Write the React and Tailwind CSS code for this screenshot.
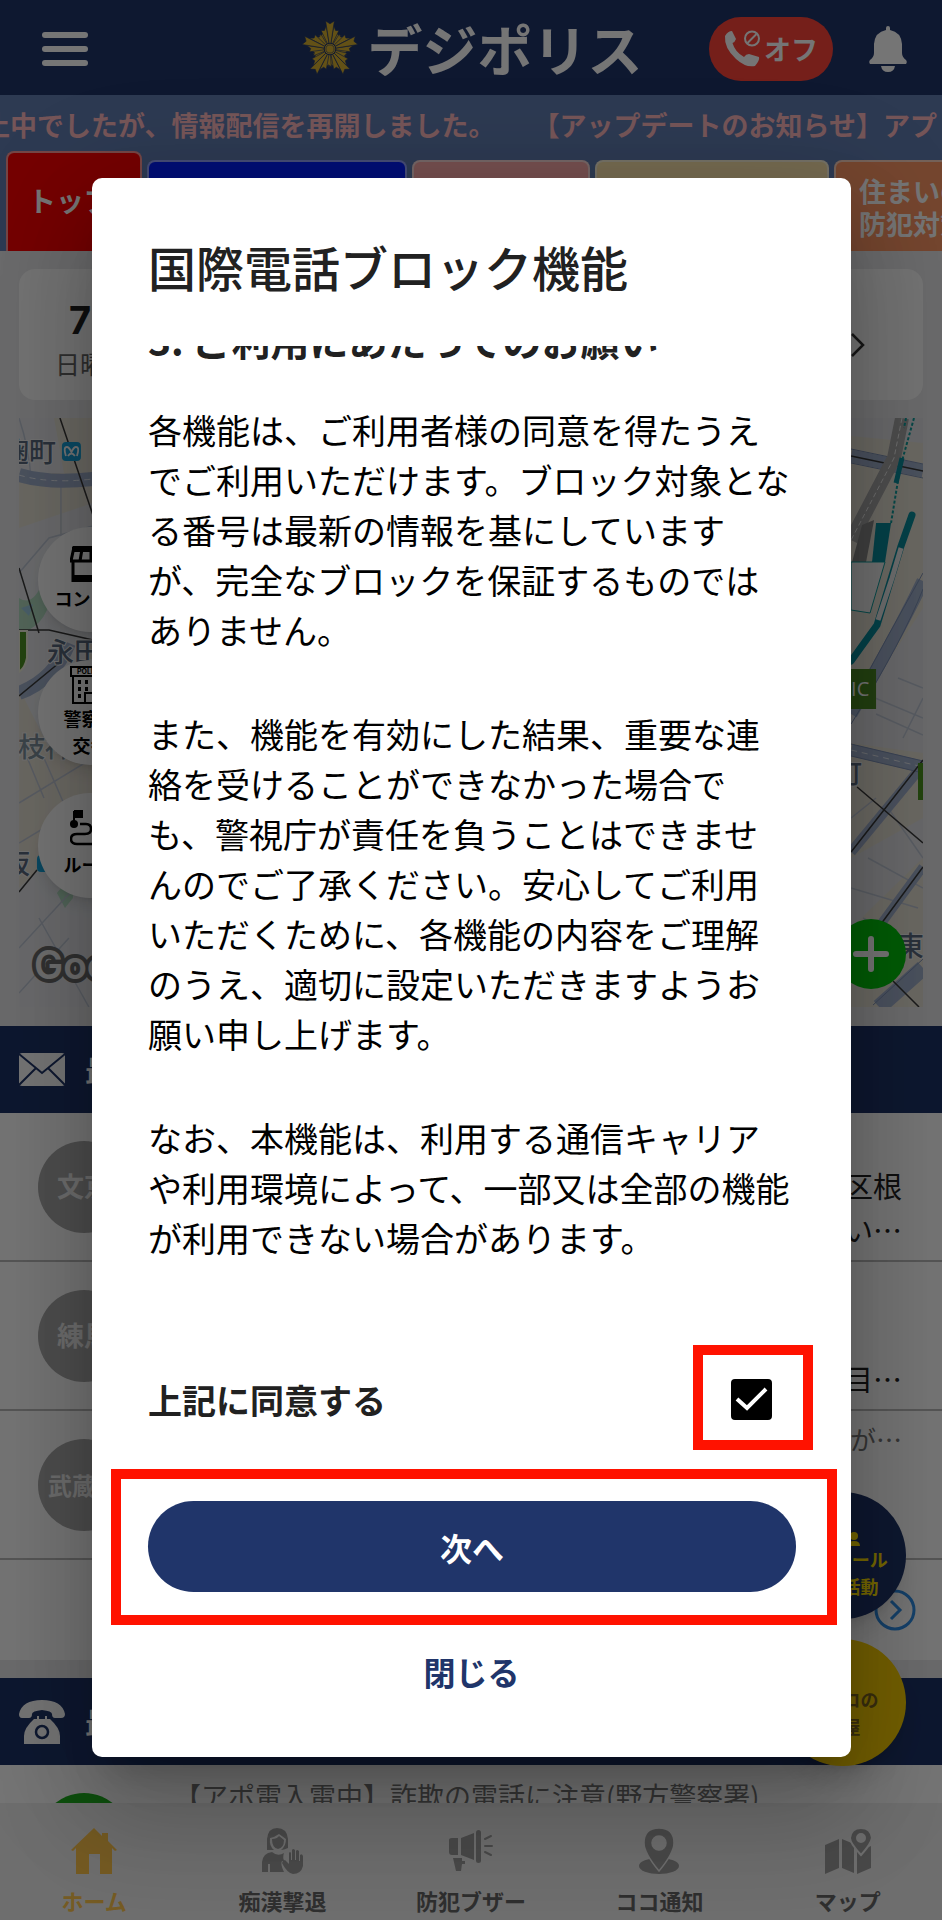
import React, { useState } from 'react';

const tabs = [
  { label: 'トップ', className: 'h-[100px] w-[136px] bg-[#ff0000] pr-2 pb-1 text-[28px]' },
  { label: '', className: 'h-[91px] w-[260px] bg-[#0020ff]' },
  { label: '', className: 'h-[91px] w-[178px] bg-[#ffacac]' },
  { label: '', className: 'h-[91px] w-[234px] bg-[#ffe8ae]' },
  { label: '住まいの\n防犯対策', className: 'h-[91px] w-[158px] bg-[#ff9866] text-[27px]' },
];

const mails = [
  { area: '文京', top: '', lines: ['区根', 'い…'] },
  { area: '練馬', top: '', lines: ['', '目…'] },
  { area: '武蔵野', top: 'が…', lines: ['', '…'] },
];

const paragraphs = [
  ['各機能は、ご利用者様の同意を得たうえ', 'でご利用いただけます。ブロック対象とな', 'る番号は最新の情報を基にしています', 'が、完全なブロックを保証するものでは', 'ありません。'],
  ['また、機能を有効にした結果、重要な連', '絡を受けることができなかった場合で', 'も、警視庁が責任を負うことはできませ', 'んのでご了承ください。安心してご利用', 'いただくために、各機能の内容をご理解', 'のうえ、適切に設定いただきますようお', '願い申し上げます。'],
  ['なお、本機能は、利用する通信キャリア', 'や利用環境によって、一部又は全部の機能', 'が利用できない場合があります。'],
];

const Emblem = () => (
  <svg viewBox="-30 -30 60 60" className="h-[58px] w-[58px]" fill="#d8b030">
    {[0, 72, 144, 216, 288].map((arm) => (
      <g key={arm} transform={`rotate(${arm})`} stroke="#20356a" strokeWidth="0.6">
        <path transform="rotate(-29)" d="M0 0 L-3.6 -18 L-0.6 -16.5 L2.6 -19 Z" />
        <path transform="rotate(29)" d="M0 0 L3.6 -18 L0.6 -16.5 L-2.6 -19 Z" />
        <path transform="rotate(-16)" d="M0 0 L-3.6 -21 L-0.3 -20 L2.8 -24 Z" />
        <path transform="rotate(16)" d="M0 0 L3.6 -21 L0.3 -20 L-2.8 -24 Z" />
        <path d="M0 0 L-4.5 -29 L0 -26 L4.5 -29 Z" />
      </g>
    ))}
    <circle r="6" stroke="#20356a" strokeWidth="1" />
    <circle r="4.2" fill="none" stroke="#20356a" strokeWidth="0.6" />
  </svg>
);

const PhoneOffIcon = () => (
  <svg viewBox="0 0 36 38" className="h-[38px] w-[36px]" fill="#fff">
    <path d="M1 6 Q4 1 8 1 L12 9 Q11 12 8.500 13 Q11 22 20 27 Q22 24 25 24 L35 27 Q36 30 31 36 Q22 38 12 29 Q0 18 1 6 Z" />
    <circle cx="28" cy="8.500" r="7" fill="none" stroke="#fff" strokeWidth="2" />
    <path d="M23.500 13 L32.500 4" stroke="#fff" strokeWidth="2" />
  </svg>
);

const BellIcon = () => (
  <svg viewBox="0 0 38 46" className="h-[46px] w-[38px]" fill="#fff">
    <path d="M17 4 V2 Q17 0 19 0 Q21 0 21 2 V4 Q32 6 33 18 V27 Q33 31 37 34 Q38.500 36 37 38 H1 Q-0.500 36 1 34 Q5 31 5 27 V18 Q6 6 17 4 Z" />
    <path d="M12 40 H26 Q25 46 19 46 Q13 46 12 40 Z" />
  </svg>
);

const MapDrawing = () => (
  <svg viewBox="0 0 905 589" preserveAspectRatio="none" className="block h-full w-full">
    <rect width="905" height="589" fill="#eae4d8" />
    {/* city blocks */}
    <path d="M0 0 H35 L45 55 H0 Z M0 110 L74 85 V220 L30 330 L0 270 Z M0 470 L74 400 V589 H0 Z" fill="#e6e8ec" />
    <path d="M833 0 H905 V25 L833 18 Z M833 300 L905 190 V335 L833 325 Z M833 440 L905 400 V440 L833 510 Z" fill="#e4e5e9" />
    <path d="M0 180 Q15 190 25 160 H32 V180 Q25 210 0 215 Z M38 475 L55 455 L54 480 L46 490 Z" fill="#b5dfc4" />
    <path d="M2 190 l12 -4 l-4 12 z" fill="#9fcfe4" />
    {/* minor streets */}
    <g stroke="#c3cad8" strokeWidth="1.500" fill="none">
      <path d="M0 155 L30 120 L74 108 M42 68 V118 M0 320 L25 380 M0 385 L74 340 M25 340 L60 420 M0 425 L50 395 M0 530 L74 450 M20 500 L70 589 M0 575 L50 520 M0 0 Q10 30 12 60" />
      <path d="M833 270 L905 300 M858 296 L905 317 M880 260 L905 270 M850 440 L905 470 M833 470 L900 490 M870 390 L905 440 M845 500 L880 520 M885 320 L905 280 M833 400 L858 380" />
    </g>
    {/* main roads */}
    <g stroke="#a3b3cf" fill="none">
      <path d="M0 57 Q30 66 74 61" strokeWidth="14" />
      <path d="M0 275 Q35 262 50 225" strokeWidth="14" />
      <path d="M833 38 L905 53" strokeWidth="13" />
      <path d="M905 163 Q880 215 833 296" strokeWidth="13" />
      <path d="M833 332 L905 349" strokeWidth="12" />
      <path d="M905 347 L833 434" strokeWidth="10" />
      <path d="M905 449 L860 510" strokeWidth="9" />
      <path d="M905 550 L861 589" strokeWidth="16" />
    </g>
    <g stroke="#7f93b8" strokeWidth="1" fill="none">
      <path d="M905 155 Q874 210 833 286 M905 171 Q886 220 833 306 M833 31 L905 46 M833 45 L905 60" />
      <path d="M833 326 L905 343 M833 338 L905 355 M905 541 L855 587" />
    </g>
    <g stroke="#e5e9f2" strokeDasharray="6 5" fill="none">
      <path d="M0 57 Q30 66 74 61 M833 332 L905 349" />
    </g>
    <g stroke="#3b3b3b" strokeWidth="1.500" fill="none">
      <path d="M41 0 L74 97 M0 278 L40 245 M0 150 L20 215 M0 212 H30 L74 222 M0 474 L18 452" />
      <path d="M839 369 L905 425 M905 342 L833 434 M905 449 L860 510 M875 563 L901 589 M833 38 L905 53" />
    </g>
    {/* rail yard */}
    <path d="M884 0 L876 40 L833 122" stroke="#aaa" strokeWidth="14" fill="none" />
    <path d="M884 0 L876 40 L833 122" stroke="#eee" strokeDasharray="5 3" fill="none" />
    <path d="M844 107 L856 102 L848 144 L834 144 Z" fill="#8c8c8c" />
    <path d="M833 144 H867 L852 195 L833 192 Z" fill="#f4f4f4" stroke="#11a0a0" strokeWidth="1" />
    <path d="M858 105 H873 L867 144 H854 Z" fill="#0b90a0" />
    <path d="M896 0 L882 50 L873 105 M888 0 L886 10" stroke="#11a0a0" strokeWidth="2" strokeDasharray="3 2" fill="none" />
    <path d="M884 40 L878 65" stroke="#0b90a0" strokeWidth="5" />
    <path d="M894 97 L883 128 L859 207 L833 243" stroke="#0b90a0" strokeWidth="7" strokeLinecap="round" fill="none" />
    <path d="M883 130 L874 160 L860 202" stroke="#f0f0f0" strokeWidth="5" fill="none" />
    {/* signs */}
    <path d="M0 213 H8 V240 Q6 250 0 254 Z" fill="#4f9426" stroke="#f4f4e0" strokeWidth="2" />
    <rect x="43" y="24" width="19" height="19" rx="4" fill="#18a4dc" />
    <path d="M47 38 Q44 29 48 29 Q50 29 52.500 34 Q55 29 57 29 Q61 29 58 38 M49 38 Q52.500 33 56 38" stroke="#fff" strokeWidth="1.800" fill="none" strokeLinejoin="round" />
    <rect x="18" y="437" width="16" height="17" rx="4" fill="#18a4dc" />
    <rect x="808" y="251" width="50" height="40" fill="#4c8c26" />
    <rect x="900" y="345" width="10" height="37" fill="#4c9422" />
    <g fontFamily='"Noto Sans CJK JP", sans-serif' fontWeight="500" fill="#5c6c82" fontSize="27" stroke="#f3f3f3" strokeWidth="2" paintOrder="stroke">
      <text x="-17" y="44">麹町</text>
      <text x="28" y="244">永田町</text>
      <text x="-1" y="339" fill="#8294a0">枝神</text>
      <text x="-16" y="456">坂</text>
      <text x="817" y="365">町</text>
      <text x="879" y="538">東</text>
    </g>
    <text x="833" y="278" fontFamily='"Open Sans", sans-serif' fontSize="20" fill="#fff">IC</text>
    <text x="15" y="561" fontFamily="Inter, sans-serif" fontWeight="600" fontSize="39" fill="#f0f0f0" stroke="#6b6b6b" strokeWidth="8" paintOrder="stroke" strokeLinejoin="round">Google</text>
  </svg>
);

const StoreIcon = () => (
  <svg viewBox="0 0 42 36" className="h-[36px] w-[42px]">
    <path d="M4 1 H38 L41 15 H1 Z M3 15 H39 V35 H3 Z" fill="#fff" stroke="#000" strokeWidth="3" />
    <path d="M2 1 H40 V6 H2 Z M2 29 H40 V36 H2 Z" />
    <path d="M12 3 L10 15 M21 3 V15 M30 3 L32 15" stroke="#000" strokeWidth="3" />
  </svg>
);

const PoliceIcon = () => (
  <svg viewBox="0 0 42 39" className="h-[39px] w-[42px]">
    <path d="M1 1 H41 V10 H1 Z M3 10 H39 V37 H3 Z M15 37 V27 H27 V37" fill="none" stroke="#000" strokeWidth="2" />
    <text x="7" y="8" fontSize="7" fontWeight="700" fontFamily="Inter, sans-serif">POLICE</text>
    <path d="M8 16 H36 M8 23 H36 M8 30 H13 M30 30 H36" stroke="#000" strokeWidth="4" strokeDasharray="3 4" />
  </svg>
);

const RouteIcon = () => (
  <svg viewBox="0 0 42 36" className="h-[36px] w-[42px]" fill="none" stroke="#000">
    <circle cx="4" cy="14" r="4" fill="#000" stroke="none" />
    <path d="M4 14 V1" strokeWidth="2" />
    <path d="M4 0 H13 V8 H4 Z" fill="#000" stroke="none" />
    <path d="M10 14 H16 Q21 14 21 19 Q21 24 15 24 H7 Q1 24 1 29 Q1 34 7 34 H30 Q38 34 38 26" strokeWidth="2.500" />
  </svg>
);

const EnvelopeIcon = () => (
  <svg viewBox="0 0 46 33" className="h-[33px] w-[46px]">
    <rect width="46" height="33" rx="3" fill="#fff" />
    <path d="M0 1 L23 20 L46 1 M0 32 L17 15 M46 32 L29 15" stroke="#20356a" strokeWidth="2" fill="none" />
  </svg>
);

const TelephoneIcon = () => (
  <svg viewBox="0 0 46 44" className="h-[44px] w-[46px]" fill="#fff">
    <path d="M0 14 Q3 0 23 0 Q43 0 46 14 Q46 18 42 18 H36 Q33 18 33 14 Q33 11 23 10 Q13 11 13 14 Q13 18 10 18 H3 Q0 18 0 14 Z" />
    <path d="M18 16 H20 V19 H26 V16 H28 V19 H31 Q41 28 41 36 V44 H5 V36 Q5 28 15 19 H18 Z" />
    <circle cx="23" cy="32" r="6" fill="none" stroke="#20356a" strokeWidth="2.500" />
  </svg>
);

const HomeIcon = () => (
  <svg viewBox="0 0 46 46" className="h-[46px] w-[46px]" fill="currentColor">
    <path d="M0 22 L23 0 L31 8 V5 H37 V13 L46 22 L44 23 L41 20 V46 H29 V26 H18 V46 H5 V20 L2 23 Z" />
  </svg>
);

const WomanIcon = () => (
  <svg viewBox="0 0 46 46" className="h-[46px] w-[46px]" fill="currentColor">
    <path d="M7 22 V11 Q8 0 17 0 Q27 0 28 11 V20 Q24 22 21 22 Q26 18 26 11 L19 6 Q15 9 10 10 Q9 18 14 22 Z" />
    <path d="M12 11 Q17 11 19 8 L24 12 Q24 20 18 21 Q12 20 12 11 Z" />
    <path d="M2 44 V34 Q3 25 12 24 Q18 29 24 25 Q22 30 25 34 L22 33 Q20 36 24 44 H10 V36 H8 V44 Z" />
    <path d="M25 32 L29 36 V25 Q30 23 31 25 V32 H32 V22 Q33 20 35 22 V32 H36 V23 Q37 21 39 23 V33 H40 V27 Q42 25 43 28 V38 Q41 46 33 46 Q27 45 22 35 Q23 32 25 32 Z" />
  </svg>
);

const MegaphoneIcon = () => (
  <svg viewBox="0 0 46 46" className="h-[46px] w-[46px]" fill="currentColor">
    <path d="M1 12 Q1 10 4 10 H10 V27 H4 Q1 27 1 24 Z M13 10 L26 5 V32 L13 27 Z M5 30 H14 V33 H17 V36 H14 L13 43 H8 Z" />
    <rect x="28" y="2" width="5" height="33" rx="2.500" />
    <path d="M37 11 L43 8 M37 18 H44 M37 24 L43 27" stroke="currentColor" strokeWidth="2" strokeLinecap="round" />
  </svg>
);

const PinIcon = () => (
  <svg viewBox="0 0 46 46" className="h-[46px] w-[46px]" fill="currentColor">
    <ellipse cx="23" cy="38" rx="20" ry="8" />
    <path d="M23 43 Q8 25 8 15 Q8 0 23 0 Q38 0 38 15 Q38 25 23 43 Z M23 8 A7 7 0 1 0 23 22 A7 7 0 1 0 23 8 Z" fillRule="evenodd" stroke="#f0f0f0" strokeWidth="1.500" />
  </svg>
);

const MapIcon = () => (
  <svg viewBox="0 0 46 46" className="h-[46px] w-[46px] overflow-visible" fill="currentColor">
    <path d="M0 17 L14 11 V40 L0 46 Z M17 11 L29 16 V45 L17 40 Z M32 24 L46 18 V40 L32 46 Z" />
    <path d="M36 27 Q25 15 25 10 Q26 0 36 0 Q46 0 47 10 Q46 16 36 27 Z M36 6 A4 4 0 1 0 36 14 A4 4 0 1 0 36 6 Z" fillRule="evenodd" stroke="#f0f0f0" strokeWidth="2" />
  </svg>
);

const PeopleIcon = () => (
  <svg viewBox="0 0 34 14" className="h-[14px] w-[34px]" fill="currentColor">
    <circle cx="6" cy="4" r="4" />
    <circle cx="17" cy="4" r="4" />
    <circle cx="28" cy="4" r="4" />
    <path d="M0 14 Q0 9 6 9 Q12 9 12 14 Z M11 14 Q11 9 17 9 Q23 9 23 14 Z M22 14 Q22 9 28 9 Q34 9 34 14 Z" />
  </svg>
);

const mapButtons = [
  { icon: <StoreIcon />, label: 'コンビニ', leading: 'leading-[32px]' },
  { icon: <PoliceIcon />, label: '警察署\n交番', leading: 'leading-[27px]' },
  { icon: <RouteIcon />, label: 'ルート', leading: 'leading-[36px]' },
];

const navItems = [
  { icon: <HomeIcon />, label: 'ホーム', active: true },
  { icon: <WomanIcon />, label: '痴漢撃退' },
  { icon: <MegaphoneIcon />, label: '防犯ブザー' },
  { icon: <PinIcon />, label: 'ココ通知' },
  { icon: <MapIcon />, label: 'マップ' },
];

const Header = () => (
  <header className="flex h-[95px] shrink-0 items-center justify-between bg-[#20356a] pt-[3px] pr-[35px] pl-[42px] text-white">
    <button aria-label="メニュー" className="flex w-[46px] flex-col gap-2">
      <span className="h-[6px] rounded-full bg-white" />
      <span className="h-[6px] rounded-full bg-white" />
      <span className="h-[6px] rounded-full bg-white" />
    </button>
    <div className="ml-[147px] flex items-center gap-2">
      <Emblem />
      <span className="pb-[3px] text-[55px] leading-none font-bold">デジポリス</span>
    </div>
    <div className="flex items-center gap-9">
      <button className="flex h-16 w-[124px] items-center justify-center gap-1 rounded-full bg-[#ff443a] text-[27px] font-bold">
        <PhoneOffIcon />
        オフ
      </button>
      <button aria-label="お知らせ">
        <BellIcon />
      </button>
    </div>
  </header>
);

const SectionBar = ({ icon }) => (
  <h2 className="flex h-[87px] items-center gap-5 bg-[#20356a] px-[19px] text-[30px] font-bold text-white">
    {icon}
    最新
  </h2>
);

const Home = () => (
  <div className="flex min-h-0 flex-1 flex-col">
    <div className="shrink-0 overflow-hidden bg-[#627eb2]">
      <div className="-ml-[17px] flex h-14 items-center gap-[37px] pt-1 text-[27px] font-bold whitespace-nowrap text-[#ffb9bf]">
        <span>止中でしたが、情報配信を再開しました。</span>
        <span>【アップデートのお知らせ】アプ</span>
      </div>
      <nav className="flex h-[100px] items-end gap-[5px] pl-[6px]">
        {tabs.map((tab, index) => (
          <button
            key={index}
            className={`shrink-0 rounded-t-lg border-2 border-b-0 border-white/60 leading-[33px] font-bold whitespace-pre-line text-white ${tab.className}`}
          >
            {tab.label}
          </button>
        ))}
      </nav>
    </div>

    <main className="min-h-0 flex-1 overflow-hidden bg-[#e9e9eb]">
      <div className="mx-[19px] mt-[18px] flex h-[131px] items-center justify-between rounded-2xl bg-[#fcfcfc] pt-5 pr-[58px] pl-9">
        <div className="flex flex-col items-center pb-2">
          <span className="font-[Inter] text-[38px] leading-[44px] font-bold text-[#222]">7</span>
          <span className="text-[25px] leading-[42px] text-[#666]">日曜</span>
        </div>
        <svg viewBox="0 0 14 24" className="h-6 w-[14px]" fill="none" stroke="#333" strokeWidth="2.500">
          <path d="M1 1 L12 12 L1 23" />
        </svg>
      </div>

      <div className="relative mx-[19px] mt-[18px] h-[589px] overflow-hidden">
        <MapDrawing />
        <div className="absolute top-[109px] left-[19px] flex flex-col gap-7">
          {mapButtons.map((item) => (
            <button
              key={item.label}
              className={`flex h-[105px] w-[105px] flex-col items-center justify-center rounded-full bg-white text-[18px] font-bold whitespace-pre-line text-black shadow-lg ${item.leading}`}
            >
              {item.icon}
              {item.label}
            </button>
          ))}
        </div>
        <button aria-label="追加" className="absolute right-[17px] bottom-[18px] flex h-[70px] w-[70px] items-center justify-center rounded-full bg-[#00c80f]">
          <svg viewBox="0 0 36 36" className="h-9 w-9" stroke="#fff" strokeWidth="6" strokeLinecap="round">
            <path d="M18 3 V33 M3 18 H33" />
          </svg>
        </button>
      </div>

      <div className="mt-[19px]">
        <SectionBar icon={<EnvelopeIcon />} />
        <ul className="bg-white">
          {mails.map((mail) => (
            <li key={mail.area} className="flex h-[149px] items-center justify-between border-b-2 border-[#bbb] pr-10 pl-[38px]">
              <span
                className={`flex h-[92px] w-[92px] items-center justify-center rounded-full bg-[#aaa] font-bold text-[#eee] ${mail.area.length > 2 ? 'text-[24px]' : 'text-[27px]'}`}
              >
                {mail.area}
              </span>
              <div className="pb-1 text-right text-[29px] leading-[44px] text-[#222]">
                <p className="h-11 text-[26px] text-[#777]">{mail.top}</p>
                {mail.lines.map((line, index) => (
                  <p key={index} className="h-11">{line}</p>
                ))}
              </div>
            </li>
          ))}
          <li className="flex h-[100px] items-center justify-end pr-[26px]">
            <a href="#mail" aria-label="もっと見る">
              <svg viewBox="0 0 42 42" className="h-[42px] w-[42px]" fill="none" stroke="#2f8fe8" strokeWidth="3">
                <circle cx="21" cy="21" r="19" />
                <path d="M17 12 L26 21 L17 30" />
              </svg>
            </a>
          </li>
        </ul>
      </div>

      <div className="mt-[18px]">
        <SectionBar icon={<TelephoneIcon />} />
        <div className="flex gap-11 bg-white pl-[38px]">
          <span className="mt-7 h-[92px] w-[92px] shrink-0 rounded-full bg-[#20b020]" />
          <p className="mt-[11px] text-[27px] leading-10 whitespace-nowrap text-[#777]">【アポ電入電中】詐欺の電話に注意(野方警察署)</p>
        </div>
      </div>
    </main>
  </div>
);

const BottomNav = () => (
  <nav className="grid h-[117px] shrink-0 grid-cols-5 bg-[#f0f0f0]">
    {navItems.map((item) => (
      <a
        key={item.label}
        href="#nav"
        className={`flex flex-col items-center gap-[6px] pt-[25px] text-[22px] leading-10 font-bold ${item.active ? 'text-[#ffc64e]' : 'text-[#a0a0a0]'}`}
      >
        {item.icon}
        <span className={item.active ? 'text-[#ffc64e]' : 'text-[#686868]'}>{item.label}</span>
      </a>
    ))}
  </nav>
);

const BlockDialog = () => {
  const [agreed, setAgreed] = useState(true);

  return (
    <div className="absolute inset-0 flex bg-black/54 pt-[178px] pr-[91px] pb-[163px] pl-[92px]">
      <div
        role="dialog"
        aria-labelledby="dialog-title"
        className="flex w-full flex-col rounded-[10px] bg-white pt-14 pb-[54px] shadow-[0_28px_38px_-18px_rgba(0,0,0,0.2),0_60px_95px_8px_rgba(0,0,0,0.14),0_22px_115px_20px_rgba(0,0,0,0.12)]"
      >
        <h1 id="dialog-title" className="px-14 text-[48px] leading-[64px] font-medium text-[#212121]">
          国際電話ブロック機能
        </h1>
        <div className="mt-12 flex min-h-0 flex-1 flex-col justify-end overflow-hidden px-14">
          <h2 className="mb-10 text-[39px] leading-[51px] font-bold text-[#212121]">3. ご利用にあたってのお願い</h2>
          <div className="flex flex-col gap-[54px] text-[34px] leading-[50px] whitespace-nowrap text-black">
            {paragraphs.map((lines, index) => (
              <p key={index} className="whitespace-pre">{lines.join('\n')}</p>
            ))}
          </div>
        </div>

        <div className="mt-[82px] flex items-center justify-between pr-[38px] pl-14">
          <label htmlFor="agree" className="pt-1 text-[34px] font-bold text-[#212121]">上記に同意する</label>
          <div className="flex h-[105px] w-[120px] items-center justify-center border-10 border-[#ff1200] pt-1 pr-1">
            <span className="relative h-[41px] w-[41px]">
              <input
                id="agree"
                type="checkbox"
                checked={agreed}
                onChange={(e) => setAgreed(e.target.checked)}
                className="peer block h-full w-full appearance-none rounded-sm border-2 border-black checked:bg-black"
              />
              <svg viewBox="0 0 41 41" className="pointer-events-none absolute inset-0 hidden peer-checked:block" fill="none" stroke="#fff" strokeWidth="4">
                <path d="M6 20 L16 29 L35 10" />
              </svg>
            </span>
          </div>
        </div>

        <div className="mt-[19px] mr-[14px] ml-[19px] border-10 border-[#ff1200] pt-[22px] pr-[31px] pb-[23px] pl-[27px]">
          <button className="h-[91px] w-full rounded-full bg-[#20356a] text-[32px] font-bold text-white">次へ</button>
        </div>
        <button className="mx-auto mt-[14px] h-16 text-[32px] font-bold text-[#20356a]">閉じる</button>
      </div>
    </div>
  );
};

const App = () => (
  <div lang="ja" className="relative flex h-screen flex-col overflow-hidden font-['Noto_Sans_CJK_JP',sans-serif]">
    <Header />
    <Home />
    <BottomNav />
    <div className="absolute right-9 bottom-[154px] flex flex-col gap-5 text-[18px] leading-[27px] font-bold">
      <button className="flex h-[127px] w-[127px] flex-col items-center justify-center rounded-full bg-[#20356a] pt-5 whitespace-pre-line text-[#ffe000] shadow-xl">
        <PeopleIcon />
        {'パトロール\n防犯活動'}
      </button>
      <button className="h-[127px] w-[127px] rounded-full bg-[#fad000] pt-5 whitespace-pre-line text-[#7d6420] shadow-xl">
        {'デジコの\n部屋'}
      </button>
    </div>
    <BlockDialog />
  </div>
);

export default App;
